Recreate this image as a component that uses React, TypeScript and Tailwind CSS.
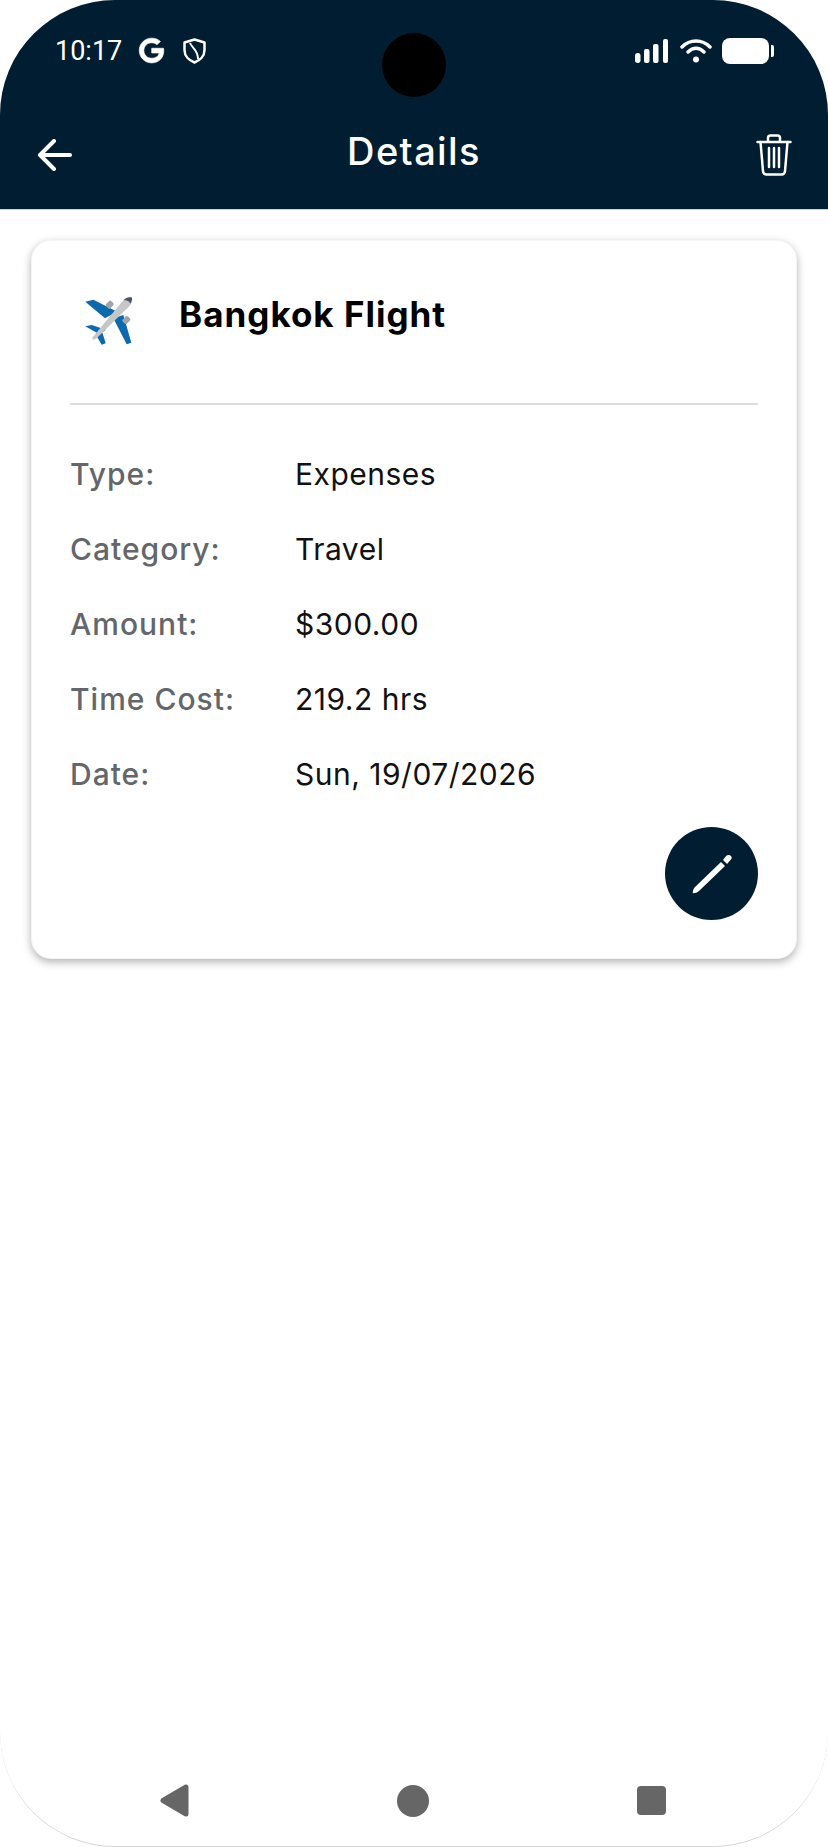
import React from 'react';

const rows = [
  ['Type:', 'Expenses'],
  ['Category:', 'Travel'],
  ['Amount:', '$300.00'],
  ['Time Cost:', '219.2 hrs'],
  ['Date:', 'Sun, 19/07/2026'],
];

const PlaneIcon = () => (
  <svg width="49" height="49" viewBox="75 45 147 147">
    <path d="M76 62 L100 56 L172 92 L135 112 Z" fill="#0b69ad" />
    <path d="M160 112 L190 102 L214 185 L200 190 Z" fill="#0b69ad" />
    <path d="M76 136 L95 132 L138 146 L118 160 Z" fill="#0b69ad" />
    <path d="M108 162 L125 148 L137 187 L125 191 Z" fill="#0b69ad" />
    <rect x="140" y="60" width="18" height="22" rx="5" fill="#9ea3a6" transform="rotate(45 149 71)" />
    <rect x="190" y="106" width="18" height="22" rx="5" fill="#9ea3a6" transform="rotate(45 199 117)" />
    <path d="M97 170 L178 72 C192 55 205 46 216 50 C220 62 210 76 193 90 L110 172 C104 177 95 177 97 170 Z" fill="#c4c6c7" />
    <path d="M190 58 C198 50 208 47 216 50 C217 56 214 62 211 68 C209 60 200 56 190 58 Z" fill="#4b5563" />
  </svg>
);

export default function App() {
  return (
    <div className="w-[828px] h-[1847px] bg-white">
      <div className="w-full h-full rounded-[115px] overflow-hidden border-b border-neutral-300 flex flex-col font-['Inter',sans-serif]">
        <header className="relative h-[210px] shrink-0 bg-[#001d32] border-b border-neutral-300 text-white">
          <div className="flex items-center justify-between pl-[55px] pr-[54px] pt-[33px]">
            <div className="flex items-center">
              <span className="font-['Roboto',sans-serif] text-[27px] leading-[34px] pt-[1px]">10:17</span>
              <svg className="ml-[16px]" width="27" height="27" viewBox="0 0 24 24" fill="white" stroke="white" strokeWidth="0.6">
                <path d="M12.2 10v4.2h6.7c-.6 3-3.3 4.7-6.7 4.7-4 0-7-3.1-7-6.9s3-6.9 7-6.9c1.8 0 3.4.6 4.7 1.8l3-3C18 2.1 15.300 1 12.200 1 6 1 1.100 5.900 1.100 12s4.900 11 11.100 11c6.300 0 10.700-4.400 10.700-10.700 0-.8-.1-1.600-.2-2.300z" />
              </svg>
              <svg className="ml-[18px]" width="23" height="26" viewBox="0 0 23 26" fill="none" stroke="white" strokeWidth="2.500" strokeLinejoin="round">
                <path d="M11.500 1.500 L21.500 4.500 V12 C21.500 18 17 22.500 11.500 24.500 C6 22.500 1.500 18 1.500 12 V4.500 Z" />
                <path d="M7 5 C9 10 15 12 15 21" strokeWidth="2" />
              </svg>
            </div>
            <div className="flex items-center">
              <svg width="34" height="24" viewBox="0 0 34 24" fill="white">
                <rect x="0" y="14" width="5.500" height="10" rx="2.700" />
                <rect x="9" y="10" width="5.500" height="14" rx="2" />
                <rect x="18" y="5" width="5.500" height="19" rx="2" />
                <rect x="28" y="0" width="5" height="24" rx="2" />
              </svg>
              <svg className="ml-[11px]" width="32" height="24" viewBox="0 0 32 24" fill="none" stroke="white" strokeWidth="3.500" strokeLinecap="round">
                <path d="M2 8 C10 0 22 0 30 8" />
                <path d="M8 13 C13 8 19 8 24 13" />
                <circle cx="16" cy="20.500" r="3" fill="white" stroke="none" />
              </svg>
              <div className="ml-[10px] w-[47px] h-[26px] bg-white rounded-[8px]" />
              <div className="ml-[2px] w-[3px] h-[12px] bg-white rounded-r-[2px]" />
            </div>
          </div>
          <div className="absolute left-[382px] top-[33px] w-[64px] h-[64px] rounded-full bg-black" />
          <div className="absolute inset-x-0 top-[130px] flex items-center justify-between pl-[37px] pr-[36px] h-[44px]">
            <svg className="mt-[6px]" width="35" height="32" viewBox="0 0 35 32" fill="none" stroke="white" strokeWidth="4" strokeLinecap="round" strokeLinejoin="round">
              <path d="M33 16 H3 M17 2 L3 16 L17 30" />
            </svg>
            <span className="text-[38px] leading-[44px] font-medium tracking-[1.4px] mb-[2px]">Details</span>
            <svg className="mt-[6px]" width="36" height="42" viewBox="0 0 36 42" fill="none" stroke="white" strokeWidth="2.500" strokeLinejoin="round" strokeLinecap="round">
              <path d="M1.500 8 H34.500 M12 7 V4 C12 2.500 13 1.500 14.500 1.500 H21.500 C23 1.500 24 2.500 24 4 V7" />
              <path d="M4.500 8 L7 37 C7 39 8.500 40.500 10.500 40.500 H25.500 C27.500 40.500 29 39 29 37 L31.500 8" />
              <path d="M13 14 V33 M18 14 V33 M23 14 V33" />
            </svg>
          </div>
        </header>

        <main className="flex-1 px-[31px] pt-[30px]">
          <div className="h-[719px] bg-white rounded-[20px] border border-neutral-100 shadow-[0_3px_8px_rgba(0,0,0,0.3)] px-[38px]">
            <div className="flex items-center h-[164px] border-b-2 border-[#dcdcdc] pb-[16px]">
              <div className="w-[109px] pl-[15px] pt-[12px]">
                <PlaneIcon />
              </div>
              <span className="text-[35px] font-bold tracking-[1px] text-black">Bangkok Flight</span>
            </div>
            <div className="flex flex-col pt-[32px]">
              {rows.map(([label, value]) => (
                <div key={label} className="flex items-center h-[75px] text-[30px]">
                  <span className="w-[225px] font-medium tracking-[1px] text-[#63666a]">{label}</span>
                  <span className="tracking-[0.5px] text-[#111111]">{value}</span>
                </div>
              ))}
            </div>
            <div className="flex justify-end mt-[15px]">
              <button className="w-[93px] h-[93px] rounded-full bg-[#001d32] flex items-center justify-center">
                <svg width="40" height="40" viewBox="0 0 40 40" fill="white">
                  <path d="M29 8 L33 12 L7 37 C5 39 1 39.500 1 39 C0.500 38.500 1 35 3 33 Z" />
                  <path d="M31 6 L34 2 C36 0.500 38 1 39 2 C40 3 40 5 38.500 6 L35 10 Z" />
                </svg>
              </button>
            </div>
          </div>
        </main>

        <nav className="h-[110px] shrink-0 flex items-center justify-between pl-[160px] pr-[162px] pt-[48px] pb-[29px]">
          <svg width="29" height="33" viewBox="0 0 29 33" fill="#666666" stroke="#666666" strokeWidth="5" strokeLinejoin="round">
            <path d="M26 3 V30 L3 16.500 Z" />
          </svg>
          <div className="w-[32px] h-[32px] rounded-full bg-[#666666]" />
          <div className="w-[29px] h-[29px] rounded-[4px] bg-[#666666]" />
        </nav>
      </div>
    </div>
  );
}
